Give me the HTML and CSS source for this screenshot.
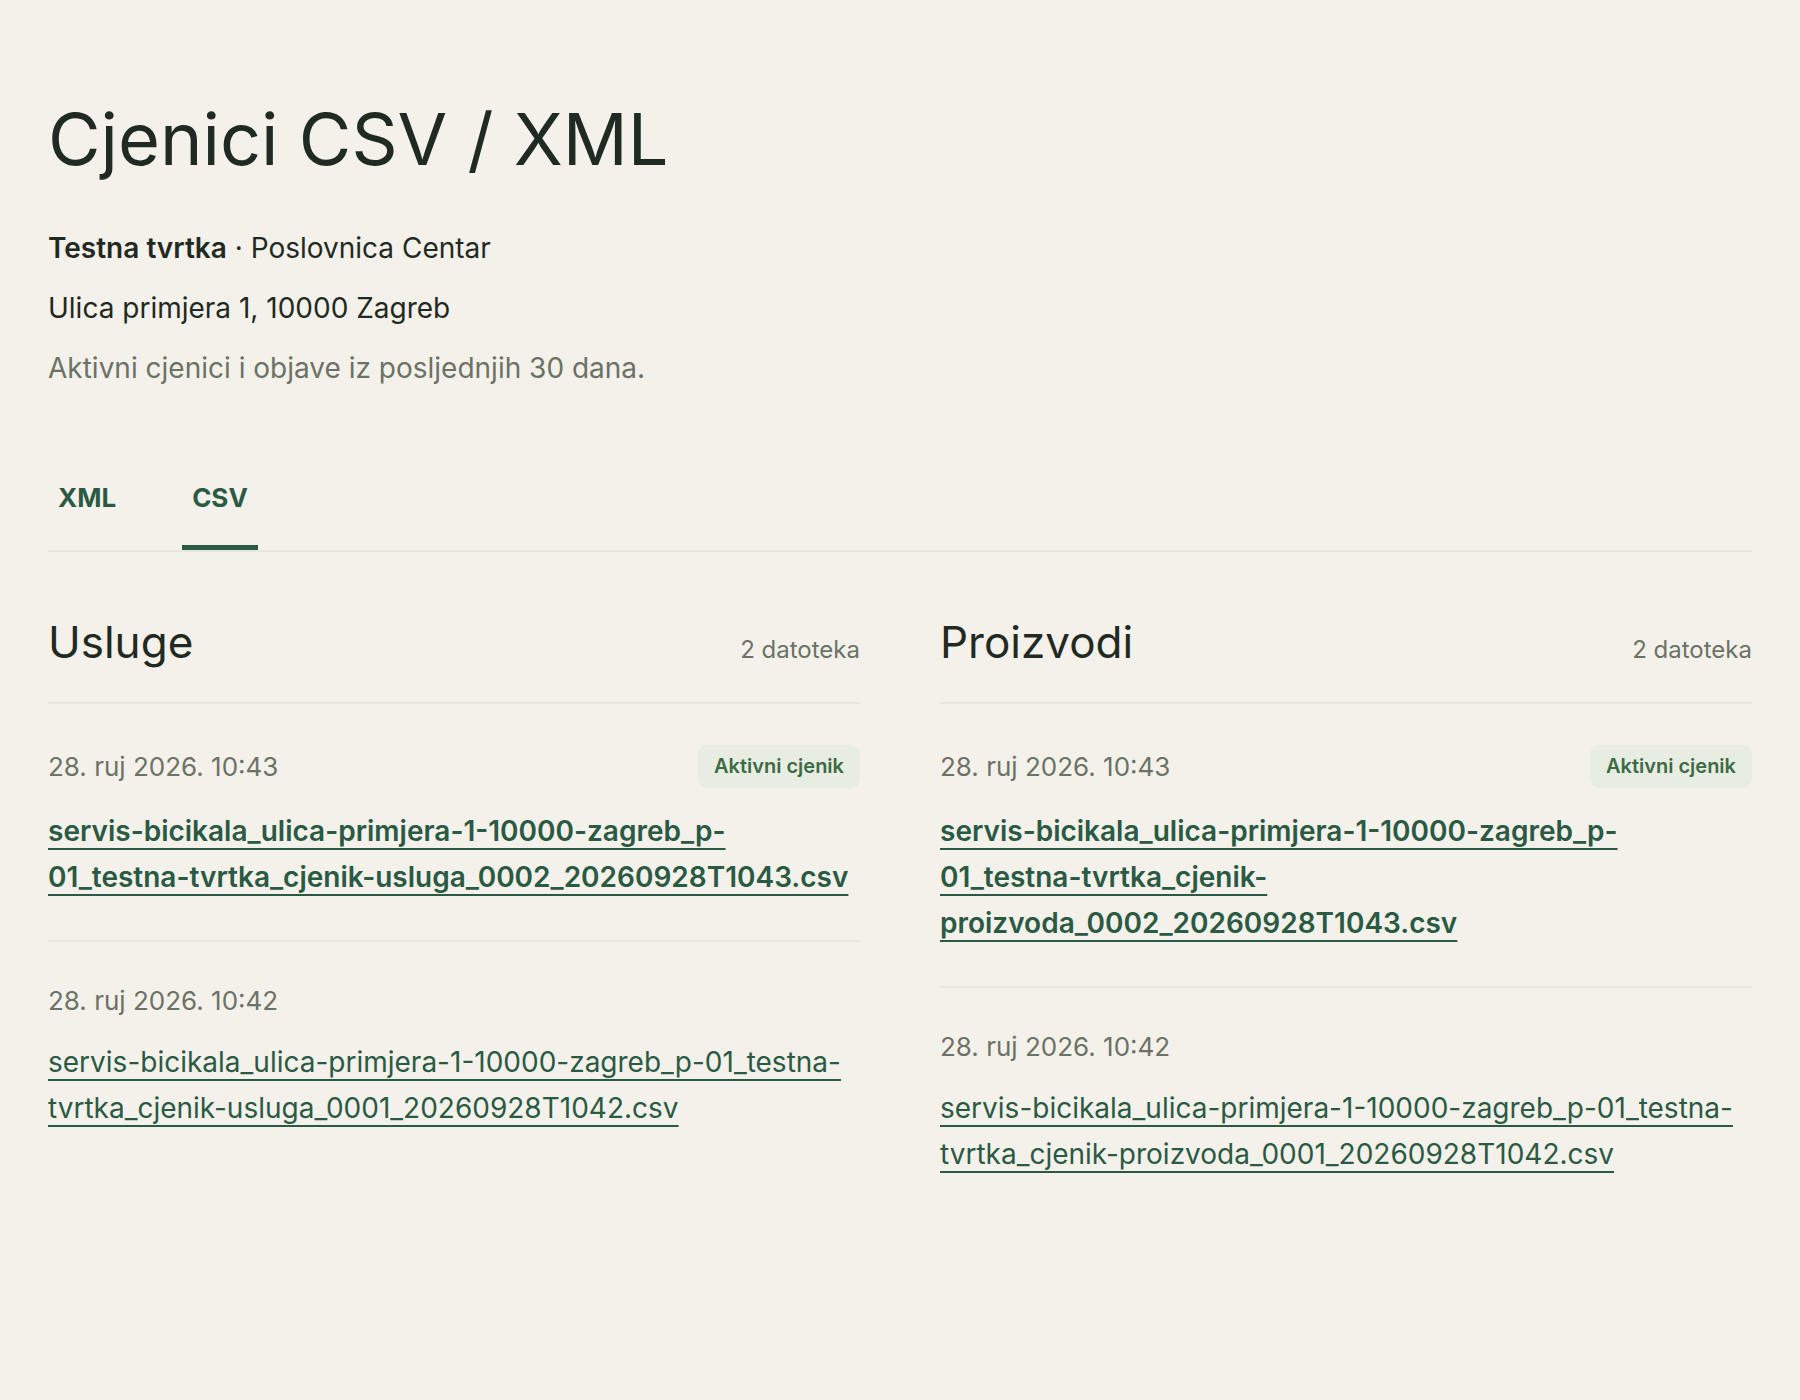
FILE: index.html
```html
<!DOCTYPE html>
<html lang="hr">
<head>
<meta charset="utf-8">
<title>Cjenici CSV / XML</title>
<link rel="stylesheet" href="styles.css">
</head>
<body>
<main class="page">
  <header class="hero">
    <h1 class="title">Cjenici CSV / XML</h1>
    <p class="meta"><strong>Testna tvrtka</strong> · Poslovnica Centar</p>
    <p class="meta">Ulica primjera 1, 10000 Zagreb</p>
    <p class="meta muted">Aktivni cjenici i objave iz posljednjih 30 dana.</p>
  </header>

  <nav class="tabs">
    <a class="tab" href="#">XML</a>
    <a class="tab active" href="#">CSV</a>
  </nav>

  <div class="columns">
    <section class="group">
      <div class="group-head">
        <h2 class="group-title">Usluge</h2>
        <span class="count">2 datoteka</span>
      </div>
      <ul class="files">
        <li class="file">
          <div class="file-head">
            <span class="date">28. ruj 2026. 10:43</span>
            <span class="badge">Aktivni cjenik</span>
          </div>
          <a class="file-link current" href="#">servis-bicikala_ulica-primjera-1-10000-zagreb_p-01_testna-tvrtka_cjenik-usluga_0002_20260928T1043.csv</a>
        </li>
        <li class="file">
          <div class="file-head">
            <span class="date">28. ruj 2026. 10:42</span>
          </div>
          <a class="file-link" href="#">servis-bicikala_ulica-primjera-1-10000-zagreb_p-01_testna-tvrtka_cjenik-usluga_0001_20260928T1042.csv</a>
        </li>
      </ul>
    </section>

    <section class="group">
      <div class="group-head">
        <h2 class="group-title">Proizvodi</h2>
        <span class="count">2 datoteka</span>
      </div>
      <ul class="files">
        <li class="file">
          <div class="file-head">
            <span class="date">28. ruj 2026. 10:43</span>
            <span class="badge">Aktivni cjenik</span>
          </div>
          <a class="file-link current" href="#">servis-bicikala_ulica-primjera-1-10000-zagreb_p-01_testna-tvrtka_cjenik-proizvoda_0002_20260928T1043.csv</a>
        </li>
        <li class="file">
          <div class="file-head">
            <span class="date">28. ruj 2026. 10:42</span>
          </div>
          <a class="file-link" href="#">servis-bicikala_ulica-primjera-1-10000-zagreb_p-01_testna-tvrtka_cjenik-proizvoda_0001_20260928T1042.csv</a>
        </li>
      </ul>
    </section>
  </div>
</main>
</body>
</html>
```

FILE: styles.css
```css
* { box-sizing: border-box; }

html, body {
  margin: 0;
  padding: 0;
  background: #f4f1ea;
}

body {
  font-family: Inter, "Noto Sans", "Liberation Sans", sans-serif;
  color: #1f2a22;
  min-height: 1400px;
}

.page {
  padding: 0 48px 80px;
}

.hero {
  padding-top: 96px;
}

.title {
  margin: 0;
  font-size: 72px;
  line-height: 1.2;
  font-weight: 400;
  color: #1f2a22;
}

.meta {
  margin: 24px 0 0;
  font-size: 28px;
  line-height: 36px;
  color: #1f2a22;
}

.title + .meta {
  margin-top: 48px;
}

.meta strong {
  font-weight: 600;
}

.muted {
  color: #6b7266;
}

.tabs {
  display: flex;
  gap: 56px;
  margin-top: 80px;
  border-bottom: 2px solid #e6e5dc;
}

.tab {
  display: block;
  padding: 16px 10px 31px;
  font-size: 26px;
  line-height: 32px;
  font-weight: 700;
  color: #2a5a44;
  text-decoration: none;
  border-bottom: 5px solid transparent;
}

.tab.active {
  border-bottom-color: #2a5a44;
}

.columns {
  display: grid;
  grid-template-columns: 1fr 1fr;
  gap: 80px;
  margin-top: 64px;
}

.group-head {
  display: flex;
  justify-content: space-between;
  align-items: baseline;
  padding-bottom: 34px;
  border-bottom: 2px solid #e8e7df;
}

.group-title {
  margin: 0;
  font-size: 44px;
  line-height: 52px;
  font-weight: 400;
  color: #1f2a22;
}

.count {
  font-size: 24px;
  color: #6b7266;
}

.files {
  list-style: none;
  margin: 0;
  padding: 0;
}

.file {
  padding: 41px 0 40px;
  border-bottom: 2px solid #e8e7df;
}

.file:last-child {
  border-bottom: none;
}

.file-head {
  display: flex;
  justify-content: space-between;
  align-items: center;
  margin-bottom: 20px;
}

.date {
  font-size: 26px;
  line-height: 36px;
  color: #6b7266;
}

.badge {
  padding: 9px 16px;
  border-radius: 9px;
  background: #e7ede1;
  color: #3d6a47;
  font-size: 20px;
  line-height: 25px;
  font-weight: 600;
}

.file-link {
  display: inline;
  font-size: 28px;
  line-height: 46px;
  color: #2a5a44;
  text-decoration: underline;
  text-decoration-thickness: 2px;
  text-underline-offset: 7px;
}

.file-link.current {
  font-weight: 600;
}
```
